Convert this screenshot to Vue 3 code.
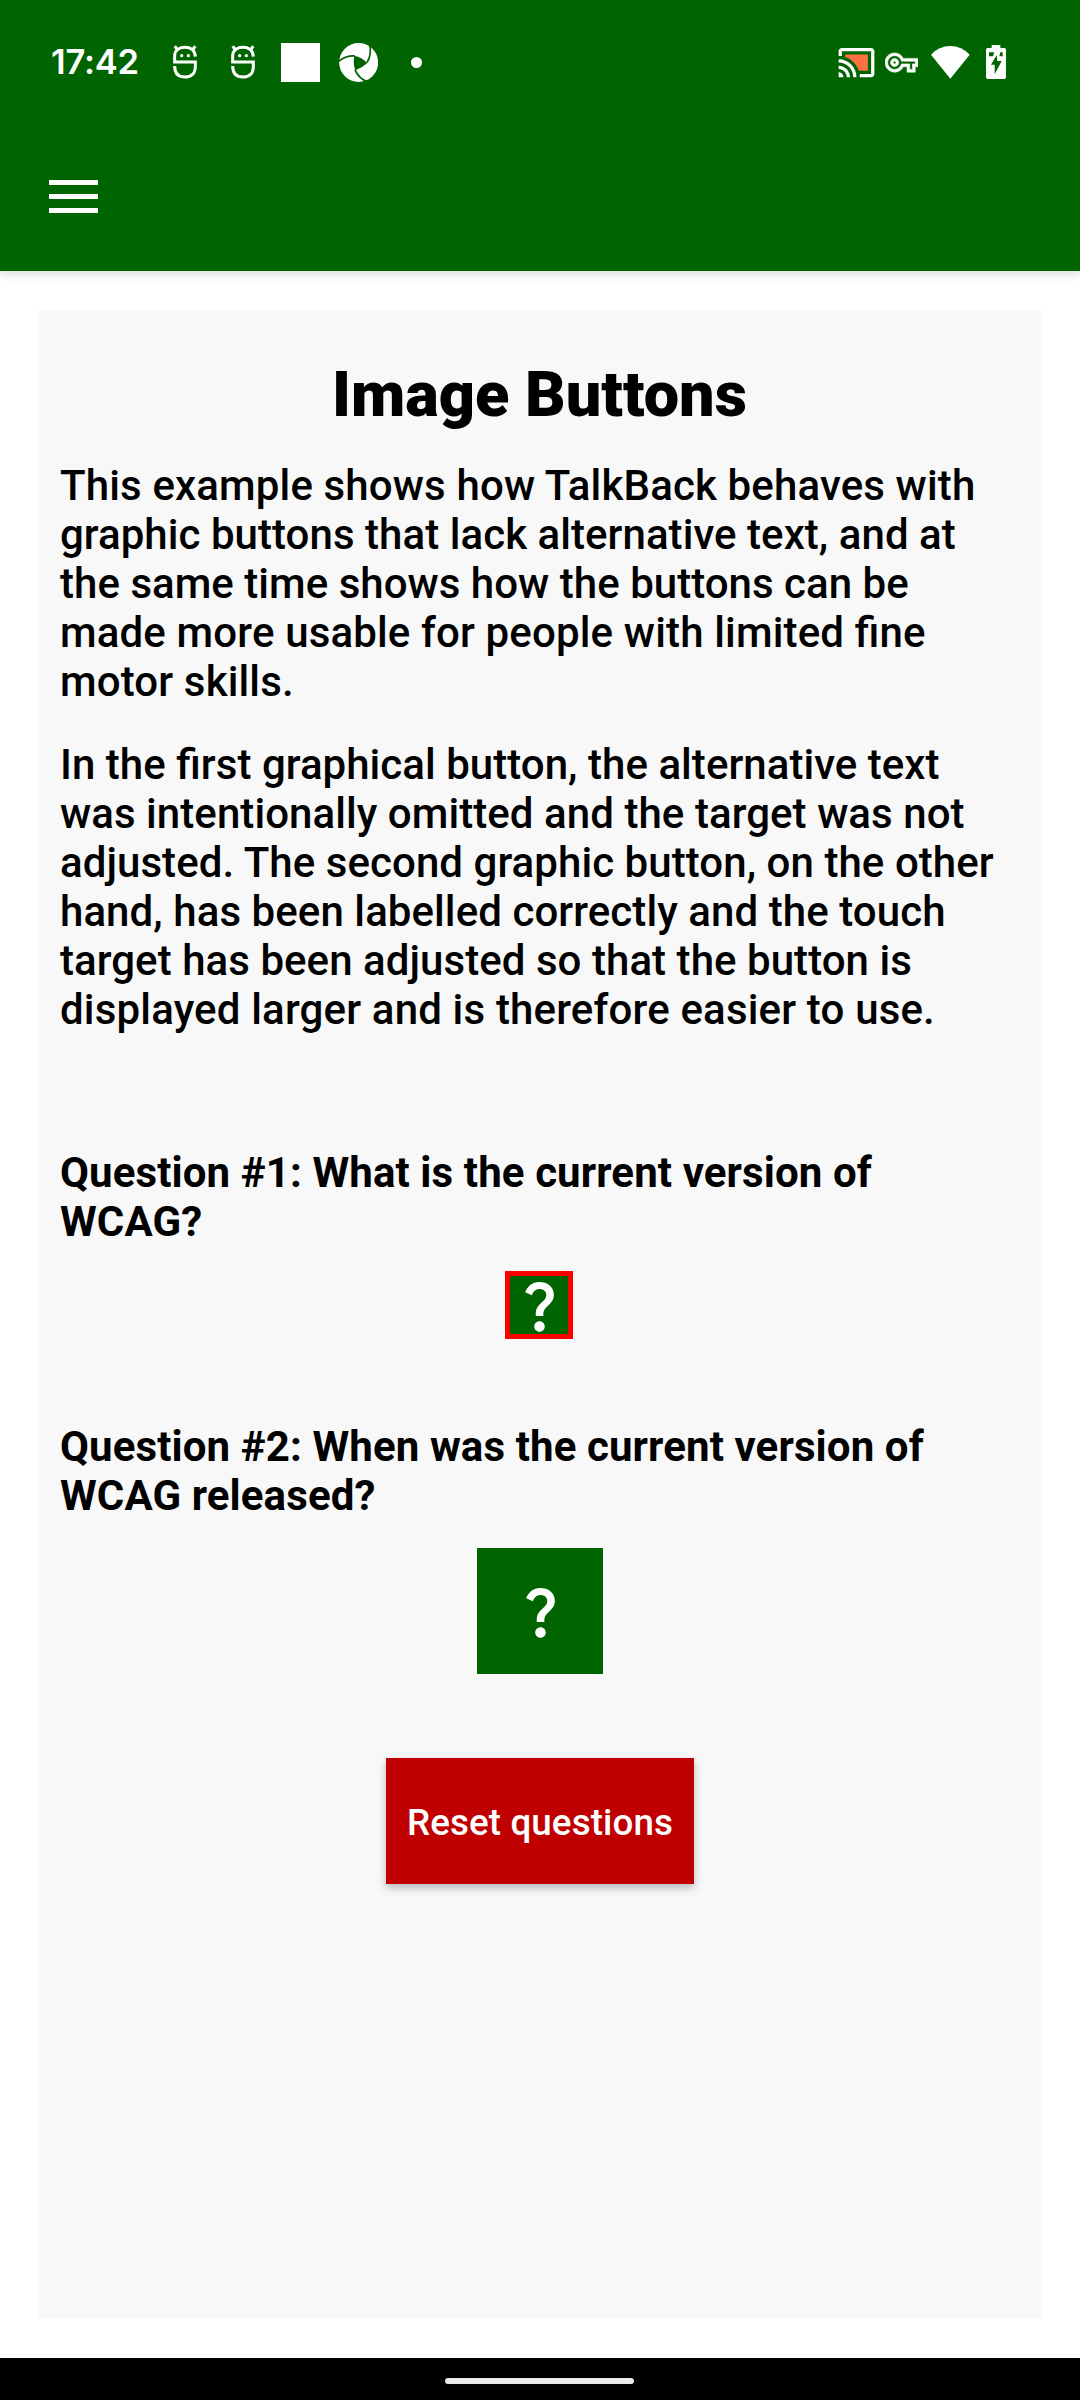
<script setup>
// each line carries its own tracking, in pixels
const intro = [
  [
    ['This example shows how TalkBack behaves with', 0.14],
    ['graphic buttons that lack alternative text, and at', 0.05],
    ['the same time shows how the buttons can be', 0.03],
    ['made more usable for people with limited fine', 0.15],
    ['motor skills.', 0.14],
  ],
  [
    ['In the first graphical button, the alternative text', 0.04],
    ['was intentionally omitted and the target was not', 0.06],
    ['adjusted. The second graphic button, on the other', 0.06],
    ['hand, has been labelled correctly and the touch', 0.07],
    ['target has been adjusted so that the button is', 0.05],
    ['displayed larger and is therefore easier to use.', 0.17],
  ],
]
const questions = [
  { lines: ['Question #1: What is the current version of', 'WCAG?'], kind: 'small' },
  { lines: ['Question #2: When was the current version of', 'WCAG released?'], kind: 'large' },
]
</script>

<template>
  <div class="screen">
    <header class="top">
      <div class="status">
        <span class="time">17:42</span>
        <svg v-for="n in 2" :key="n" class="mask" viewBox="426 72 78 108">
          <g fill="none" stroke="#fff" stroke-width="9">
            <path d="M496 110C495 90 481 82 465 82S434 90 434 108V126H496V140C496 160 484 171 465 171S434 160 434 138" />
            <path d="M434 79L445 92M496 79L485 92" />
          </g>
          <circle cx="455" cy="107" r="5" fill="#fff" />
          <circle cx="475" cy="107" r="5" fill="#fff" />
        </svg>
        <span class="square"></span>
        <svg class="shutter" viewBox="237 66 117 117">
          <circle cx="296" cy="124.500" r="58.500" fill="#fff" />
          <path d="M283 104Q305 108 322 126Q305 142 286 148Q278 126 283 104Z" fill="#006400" />
          <g fill="none" stroke="#006400" stroke-width="5">
            <path d="M236 121Q258 103 285 105" />
            <path d="M329 70Q336 99 321 125" />
            <path d="M285 146Q296 174 326 184" />
          </g>
        </svg>
        <span class="dot"></span>
        <svg class="cast" viewBox="0 0 24 24">
          <path fill="#ff7043" d="M19 7H5v1.630c3.960 1.280 7.090 4.410 8.370 8.370H19V7z" />
          <path fill="#fff" d="M1 18v3h3c0-1.660-1.340-3-3-3zm0-4v2c2.760 0 5 2.240 5 5h2c0-3.870-3.130-7-7-7zM21 3H3c-1.100 0-2 .9-2 2v3h2V5h18v14h-7v2h7c1.100 0 2-.9 2-2V5c0-1.100-.9-2-2-2zM1 10v2c4.970 0 9 4.030 9 9h2c0-6.080-4.930-11-11-11z" />
        </svg>
        <svg class="key" viewBox="0 0 24 24">
          <path fill="#fff" stroke="#fff" stroke-width="0.400" d="M22 19h-6v-4h-2.680c-1.140 2.420-3.600 4-6.320 4-3.860 0-7-3.140-7-7s3.140-7 7-7c2.720 0 5.170 1.580 6.320 4H24v6h-2v4zm-4-2h2v-4h2v-2H11.940l-.23-.67C11.010 8.340 9.110 7 7 7c-2.760 0-5 2.240-5 5s2.240 5 5 5c2.110 0 4.010-1.340 4.710-3.330l.23-.67H18v4zM7 15c-1.650 0-3-1.350-3-3s1.350-3 3-3 3 1.350 3 3-1.350 3-3 3zm0-4c-.55 0-1 .45-1 1s.45 1 1 1 1-.45 1-1-.45-1-1-1z" />
        </svg>
        <svg class="wifi" viewBox="333 75 117 99">
          <path fill="#fff" d="M333 101Q357 75 391 75T449 101L391 173Z" />
        </svg>
        <svg class="battery" viewBox="498 75 60 102">
          <path fill="#fff" d="M515 75H541V84H553Q558 84 558 89V172Q558 177 553 177H503Q498 177 498 172V89Q498 84 503 84H515Z" />
          <path fill="#006400" d="M507 97H523L519 109H507ZM541 97H548V109H538ZM530 105L513 134H524V163L545 123H532Z" />
        </svg>
      </div>
      <div class="appbar">
        <button class="menu" aria-label="Menu"><i></i><i></i><i></i></button>
      </div>
    </header>

    <main class="card">
      <h1>Image Buttons</h1>
      <p v-for="(para, i) in intro" :key="i">
        <span v-for="[text, tracking] in para" :key="text" class="line" :style="{ letterSpacing: tracking + 'px' }">{{ text }}</span>
      </p>
      <section v-for="q in questions" :key="q.kind" :class="q.kind">
        <h2><span v-for="line in q.lines" :key="line" class="line">{{ line }}</span></h2>
        <button class="ask">
          <svg viewBox="0 0 24 24">
            <path fill="#fff" d="M11.070 12.850c.77-1.390 2.250-2.210 3.110-3.440.91-1.290.4-3.700-2.180-3.700-1.690 0-2.520 1.280-2.870 2.340L6.540 6.960C7.250 4.830 9.180 3 11.990 3c2.350 0 3.960 1.070 4.780 2.410.7 1.150 1.110 3.300.03 4.900-1.200 1.770-2.350 2.310-2.970 3.450-.25.46-.35.76-.35 2.240h-2.890c-.01-.78-.13-2.050.48-3.150zM14 20c0 1.100-.9 2-2 2s-2-.9-2-2 .9-2 2-2 2 .9 2 2z" />
          </svg>
        </button>
      </section>
      <button class="reset">Reset questions</button>
    </main>

    <footer class="nav"><span></span></footer>
  </div>
</template>

<style>
body { margin: 0; background: #fff; }
</style>

<style scoped>
.screen {
  width: 1080px;
  height: 2400px;
  display: flex;
  flex-direction: column;
  background: #fff;
  color: #000;
  font-family: Roboto, "Noto Sans", sans-serif;
}
button { border: 0; padding: 0; border-radius: 0; font-family: inherit; }
svg { display: block; flex: none; }
.top {
  height: 271px;
  flex: none;
  background: #006400;
  box-shadow: 0 2px 10px rgba(0, 0, 0, 0.18);
}
.status { height: 124px; display: flex; align-items: center; }
.time {
  width: 89px;
  margin-left: 51px;
  font: 600 34.5px/40px Inter, sans-serif;
  letter-spacing: -0.2px;
  color: #fff;
  white-space: nowrap;
}
.mask { width: 26px; height: 36px; margin-left: 32px; }
.square { width: 39px; height: 39px; margin-left: 25px; background: #fff; }
.shutter { width: 39px; height: 39px; margin-left: 19px; }
.dot { width: 11px; height: 11px; margin-left: 33px; border-radius: 50%; background: #fff; }
.cast { width: 39px; height: 39px; margin-left: auto; }
.key { width: 33px; height: 33px; margin-left: 9px; }
.wifi { width: 39px; height: 33px; margin-left: 13px; }
.battery { width: 20px; height: 34px; margin: 0 74px 0 16px; }
.appbar { height: 147px; display: flex; align-items: center; }
.menu {
  display: flex;
  flex-direction: column;
  gap: 9px;
  width: 49px;
  margin: 0 0 2px 48.5px;
  background: none;
}
.menu i { height: 5px; background: #fff; }
.card {
  flex: none;
  box-sizing: border-box;
  width: 1002px;
  height: 2009px;
  margin: 39px;
  padding: 48px 21px 0;
  background: #f8f8f8;
  display: flex;
  flex-direction: column;
}
h1 {
  margin: 0 1px 0 0;
  font-size: 63px;
  line-height: 74px;
  font-weight: 870;
  text-align: center;
}
p, h2 { margin: 0; font-size: 42px; line-height: 49px; }
p { font-weight: 500; margin-top: 29px; font-feature-settings: "liga" 1; }
p + p { margin-top: 34px; }
h2 { font-weight: 700; letter-spacing: 0.11px; }
.line { display: block; white-space: nowrap; }
section { display: flex; flex-direction: column; }
.small { margin-top: 114px; }
.large { margin-top: 83px; }
.ask {
  box-sizing: border-box;
  align-self: center;
  display: flex;
  align-items: center;
  justify-content: center;
  background: #006400;
}
.ask svg { width: 63px; height: 63px; }
.small .ask { width: 68px; height: 68px; border: 5px solid #f00; margin: 25px 2px 0 0; }
.small .ask svg { margin: -3px; }
.large .ask { width: 126px; height: 126px; margin-top: 28px; }
.reset {
  align-self: center;
  width: 308px;
  height: 126px;
  margin-top: 84px;
  padding-top: 2px;
  background: #c00000;
  color: #fff;
  font-size: 36.75px;
  font-weight: 500;
  letter-spacing: 0.12px;
  white-space: nowrap;
  box-shadow: 0 4px 8px rgba(0, 0, 0, 0.25);
}
.nav {
  height: 42px;
  flex: none;
  display: flex;
  align-items: center;
  justify-content: center;
  background: #000;
}
.nav span { width: 189px; height: 6px; margin: 4px 1px 0 0; border-radius: 3px; background: #ebebeb; }
</style>
